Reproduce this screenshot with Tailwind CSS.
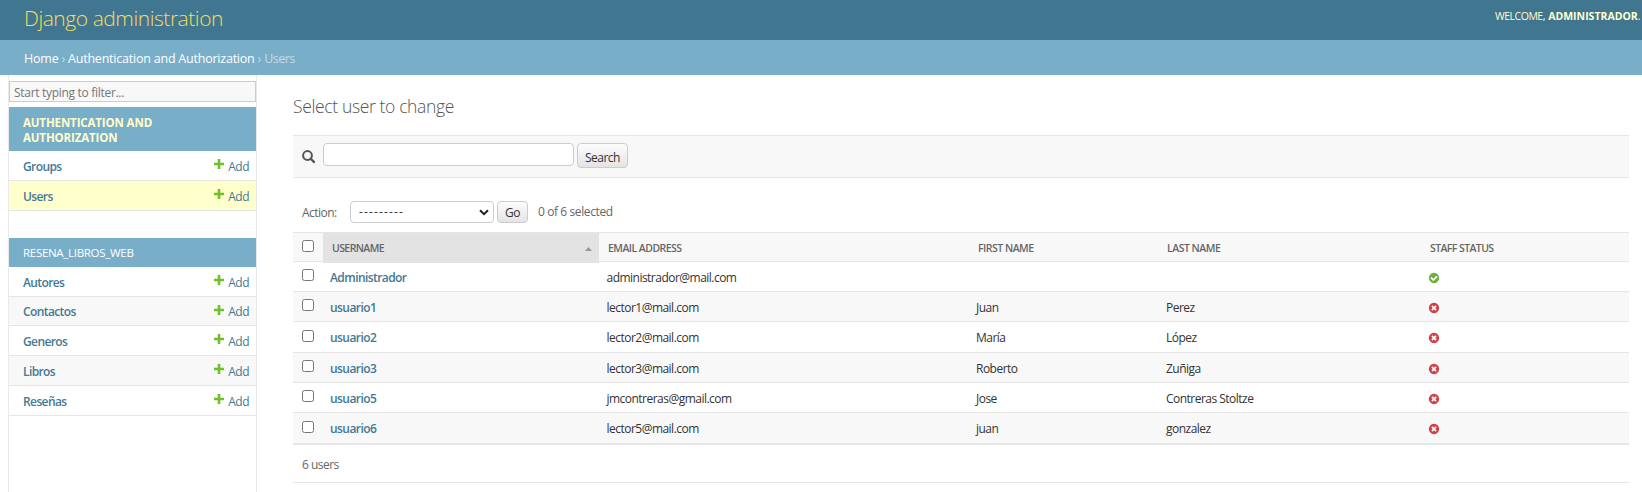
<!DOCTYPE html>
<html lang="en">
<head>
<meta charset="utf-8">
<title>Select user to change | Django site admin</title>
<script src="https://cdn.jsdelivr.net/npm/@tailwindcss/browser@4"></script>
</head>
<body class="h-[492px] overflow-hidden bg-white font-['Open_Sans',sans-serif] text-[12px] tracking-[-0.52px] text-[#333]">
<svg class="hidden">
  <symbol id="plus" viewBox="0 0 10 10"><path d="M3.7 0h2.6v3.7H10v2.6H6.3V10H3.7V6.3H0V3.7h3.7z" fill="#70bf2b"/></symbol>
  <symbol id="yes" viewBox="0 0 1792 1792"><path fill="#70b03a" d="M1412 734q0-28-18-46l-91-90q-19-19-45-19t-45 19l-408 407-226-226q-19-19-45-19t-45 19l-91 90q-18 18-18 46 0 27 18 45l362 362q19 19 45 19 27 0 46-19l543-543q18-18 18-45zm252 162q0 209-103 385.500t-279.500 279.500-385.500 103-385.500-103-279.500-279.500-103-385.500 103-385.500 279.500-279.500 385.500-103 385.500 103 279.500 279.500 103 385.500z"/></symbol>
  <symbol id="no" viewBox="0 0 1792 1792"><path fill="#d0424a" d="M1277 1122q0-26-19-45l-181-181 181-181q19-19 19-45 0-27-19-46l-90-90q-19-19-46-19-26 0-45 19l-181 181-181-181q-19-19-45-19-27 0-46 19l-90 90q-19 19-19 46 0 26 19 45l181 181-181 181q-19 19-19 45 0 27 19 46l90 90q19 19 46 19 26 0 45-19l181-181 181 181q19 19 45 19 27 0 46-19l90-90q19-19 19-46zm387-226q0 209-103 385.500t-279.500 279.500-385.500 103-385.500-103-279.500-279.500-103-385.500 103-385.500 279.500-279.500 385.500-103 385.500 103 279.500 279.500 103 385.500z"/></symbol>
</svg>

<header class="flex h-10 items-start justify-between bg-[#417690] pl-6 pr-[2px]">
  <h1 class="text-[21px] leading-[36px] font-light tracking-[-0.45px] text-[#f5dd5d]">Django administration</h1>
  <div class="pt-[9px] text-[10.5px] leading-[15px] tracking-[-0.48px] text-[#ffc]">WELCOME, <strong class="ml-px font-bold tracking-[0px]">ADMINISTRADOR</strong>.</div>
</header>
<nav class="h-[35px] bg-[#79aec8] pl-6 text-[12.5px] leading-[37px] tracking-[-0.22px] whitespace-nowrap text-[#c4dce8]"><a class="font-medium text-white">Home</a> › <a class="font-medium text-white">Authentication and Authorization</a> › <span class="tracking-[-0.5px]">Users</span></nav>

<div class="flex h-[417px]">
  <aside class="ml-2 w-[249px] shrink-0 border-x border-[#eaeaea] pt-[6px]">
    <div class="h-[21px] border border-[#ccc] bg-[#f8f8f8] pl-1 leading-[21px] tracking-[-0.3px] text-[#757575]">Start typing to filter...</div>
    <h2 class="mt-[5px] h-[44px] bg-[#79aec8] pt-[8px] pl-[14px] text-[11.5px] leading-[15px] font-bold tracking-[-0.13px] text-[#ffc]">AUTHENTICATION AND<br>AUTHORIZATION</h2>
    <div class="flex h-[30px] items-center border-b border-[#e6e6e6] pt-[2px] pr-[7px] pl-[14px] text-[#447995]"><a class="font-semibold tracking-[-0.6px]">Groups</a><svg class="mt-[-5px] mr-1 ml-auto size-[10px]"><use href="#plus"/></svg><a>Add</a></div>
    <div class="flex h-[30px] items-center border-b border-[#e6e6e6] bg-[#ffc] pt-[2px] pr-[7px] pl-[14px] text-[#447995]"><a class="font-semibold tracking-[-0.6px]">Users</a><svg class="mt-[-5px] mr-1 ml-auto size-[10px]"><use href="#plus"/></svg><a>Add</a></div>
    <h2 class="mt-[27px] h-[29px] bg-[#79aec8] pl-[14px] text-[11.5px] leading-[30px] tracking-[-0.3px] text-white">RESENA_LIBROS_WEB</h2>
    <div id="models" class="text-[#447995]"></div>
  </aside>

  <main class="ml-9 w-[1336px] shrink-0">
    <h2 class="mt-[18px] h-[42px] text-[17.5px] leading-[26px] font-light tracking-[-0.36px] text-[#555]">Select user to change</h2>
    <form class="flex h-[43px] items-start border-y border-[#e6e6e6] bg-[#f8f8f8] pl-[9px]">
      <svg class="mt-[14px] size-[13px]" viewBox="0 0 13 13" fill="none" stroke="#555"><circle cx="5.5" cy="5.500" r="4.400" stroke-width="2"/><path d="M8.700 8.700l3.400 3.400" stroke-width="2.300" stroke-linecap="round"/></svg>
      <div class="mt-[7px] ml-2 h-[23px] w-[251px] rounded border border-[#ccc] bg-white"></div>
      <div class="mt-[7px] ml-[3px] h-[25px] w-[51px] rounded border border-[#ccc] bg-linear-to-b from-[#fdfdfd] to-[#e4e4e4] text-center leading-[27px]">Search</div>
    </form>
    <div class="flex h-[54px] items-start pt-[23px] pl-[9px] text-[#666]">
      <label class="w-[48px] leading-[23px]">Action:</label>
      <div class="flex h-[22px] w-[144px] items-center justify-between rounded border border-[#ccc] bg-white pr-1 pl-2 text-[#333]"><span class="tracking-[1.150px]">---------</span><svg class="h-[7px] w-[10px]" viewBox="0 0 10 7" fill="none" stroke="#222" stroke-width="2"><path d="M1 1.200l4 4 4-4"/></svg></div>
      <div class="ml-[3px] h-[22px] w-[31px] rounded border border-[#ccc] bg-linear-to-b from-[#fdfdfd] to-[#e4e4e4] text-center leading-[22px] text-[#333]">Go</div>
      <span class="ml-[10px] leading-[21px] tracking-[-0.4px]">0 of 6 selected</span>
    </div>
    <div class="grid h-[30px] grid-cols-[30px_276px_369px_190px_262px_1fr] border-y border-[#e6e6e6] bg-[#f8f8f8] text-[10.500px] leading-[30px] font-semibold tracking-[-0.6px] text-[#666]">
      <div class="pt-[7px] pl-[9px]"><div class="size-3 rounded-[2.500px] border border-[#767676] bg-white"></div></div>
      <div class="flex items-center justify-between bg-[#e3e3e3] pr-[7px] pl-[9px]">USERNAME<svg class="mt-[2px] h-1 w-[7px]" viewBox="0 0 7 4"><path d="M0 4L3.500 0 7 4z" fill="#999"/></svg></div>
      <div class="pl-[9px] tracking-[-0.54px]">EMAIL ADDRESS</div><div class="pl-[10px] tracking-[-0.5px]">FIRST NAME</div><div class="pl-[9px] tracking-[-0.5px]">LAST NAME</div><div class="pl-[10px]">STAFF STATUS</div>
    </div>
    <div id="rows"></div>
    <div class="h-[38px] border-b border-[#e6e6e6] pl-[9px] leading-[39px] text-[#666]">6 users</div>
  </main>
</div>

<script>
document.getElementById('models').innerHTML = [['Autores','h-[30px]'],['Contactos','h-[29px] bg-[#f8f8f8]'],['Generos','h-[30px]'],['Libros','h-[30px] bg-[#f8f8f8]'],['Reseñas','h-[30px]']].map(([name, cls]) =>
  `<div class="flex ${cls} items-center border-b border-[#e6e6e6] pt-[2px] pr-[7px] pl-[14px]"><a class="font-semibold tracking-[-0.6px]">${name}</a><svg class="mt-[-5px] mr-1 ml-auto size-[10px]"><use href="#plus"/></svg><a>Add</a></div>`).join('');

document.getElementById('rows').innerHTML = [
  ['Administrador','administrador@mail.com','','','yes','h-[30px] border-b'],
  ['usuario1','lector1@mail.com','Juan','Perez','no','h-[30px] border-b bg-[#f8f8f8]'],
  ['usuario2','lector2@mail.com','María','López','no','h-[31px] border-b'],
  ['usuario3','lector3@mail.com','Roberto','Zuñiga','no','h-[30px] border-b bg-[#f8f8f8]'],
  ['usuario5','jmcontreras@gmail.com','Jose','Contreras Stoltze','no','h-[30px] border-b'],
  ['usuario6','lector5@mail.com','juan','gonzalez','no','h-[32px] border-b-2 bg-[#f8f8f8]']
].map(([user, mail, first, last, icon, cls]) =>
  `<div class="grid ${cls} grid-cols-[37px_276.500px_369.500px_190px_263px_1fr] items-center border-[#e6e6e6] pt-[2px]">
    <div class="-mt-[5px] pl-[9px]"><div class="size-3 rounded-[2.500px] border border-[#767676] bg-white"></div></div>
    <a class="font-semibold tracking-[-0.57px] text-[#447995]">${user}</a><span>${mail}</span><span>${first}</span><span>${last}</span><svg class="-ml-px size-3"><use href="#${icon}"/></svg>
  </div>`).join('');
</script>
</body>
</html>
